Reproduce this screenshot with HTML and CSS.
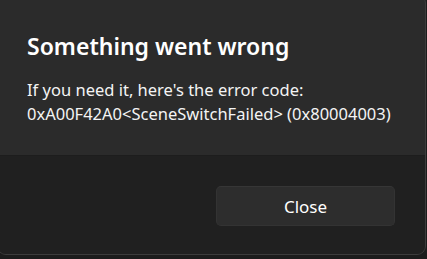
FILE: index.html
```html
<!DOCTYPE html>
<html>
<head>
<meta charset="utf-8">
<link rel="stylesheet" href="styles.css">
</head>
<body>
<div class="dialog">
  <div class="content">
    <h1 class="title">Something went wrong</h1>
    <p class="message">If you need it, here's the error code:<br>0xA00F42A0&lt;SceneSwitchFailed&gt; (0x80004003)</p>
  </div>
  <div class="footer">
    <button class="btn">Close</button>
  </div>
</div>
</body>
</html>
```
FILE: styles.css
```css
html, body {
  margin: 0;
  padding: 0;
  background: #1c1c1c;
  width: 427px;
  height: 259px;
  overflow: hidden;
}
.dialog {
  box-sizing: border-box;
  width: 429px;
  height: 261px;
  margin-top: -6px;
  margin-left: -3px;
  background: #2b2b2b;
  border: 1px solid #3c3c3c;
  border-radius: 9px;
  display: flex;
  flex-direction: column;
  overflow: hidden;
  font-family: "Noto Sans", sans-serif;
  color: #ffffff;
}
.content {
  height: 160px;
  flex: none;
  box-sizing: border-box;
  padding: 35px 0 0 29px;
}
.title {
  margin: 0;
  font-size: 23px;
  font-weight: 600;
  line-height: 32px;
}
.message {
  margin: 16px 0 0 0;
  font-size: 16.5px;
  line-height: 24px;
  color: #f4f4f4;
}
.footer {
  flex: 1;
  background: #202020;
  border-top: 1px solid #1d1d1d;
  display: flex;
  justify-content: flex-end;
  align-items: flex-start;
  padding: 30px 30px 0 0;
}
.btn {
  width: 179px;
  height: 40px;
  background: #2d2d2d;
  border: 1px solid #333333;
  border-top-color: #363636;
  border-radius: 5px;
  color: #ffffff;
  font-family: "Noto Sans", sans-serif;
  font-size: 17px;
  padding: 0;
}
```
